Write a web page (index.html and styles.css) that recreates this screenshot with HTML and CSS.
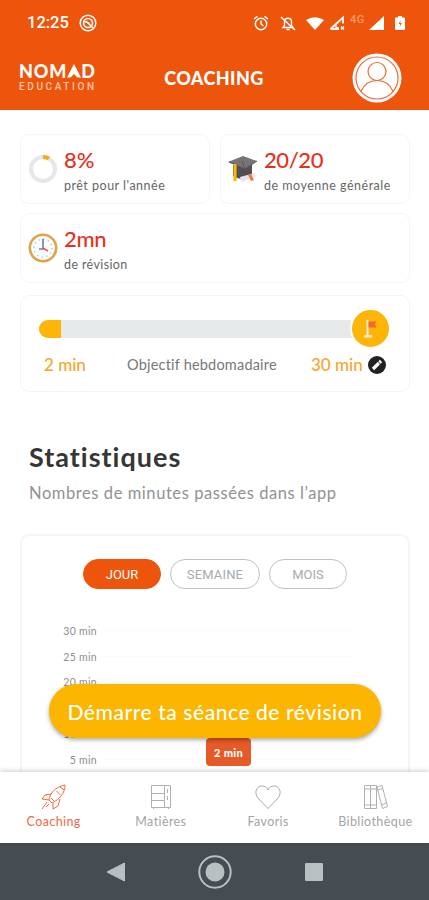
FILE: index.html
```html
<!DOCTYPE html>
<html lang="fr">
<head>
<meta charset="utf-8">
<meta name="viewport" content="width=device-width, initial-scale=1">
<title>Coaching</title>
<link rel="stylesheet" href="styles.css">
</head>
<body>
<div class="phone">
  <header class="top">
    <div class="status">
      <span class="time">12:25</span>
      <svg class="dnd" width="18" height="18" viewBox="0 0 18 18" fill="none" stroke="#fff"><circle cx="9" cy="9" r="7.800" stroke-width="1.500"/><circle cx="9" cy="9" r="4.500" stroke-width="1.600"/><path d="M4.500 7l6 2.500M7 7l7 7" stroke-width="1.500"/></svg>
      <svg class="sys" width="154" height="20" viewBox="0 0 154 20" fill="none" stroke="#fff">
        <circle cx="8" cy="11" r="5.7" stroke-width="1.5"/><path d="M8 7.5V11l2.5 2M1 6l3.5-2.7M15 6l-3.500-2.700" stroke-width="1.5"/>
        <path d="M30 14.500h10l-1.500-2V9c0-5-7-5-7 0v3.500zM33.500 16.500h3" stroke-width="1.400"/><path d="M28 4l14 13" stroke-width="1.600"/>
        <path d="M53 7q9-5.500 18 0l-9 10z" fill="#fff" stroke="none"/>
        <path d="M77.500 16L90 4.500v6M77.500 16H86" stroke-width="1.800"/><path d="M83 11v4h3M88 13.500l3 3m0-3l-3 3" stroke-width="1.300"/>
        <path d="M116 17L131 3v14z" fill="#fff" stroke="none"/>
        <path d="M143 4.500h2V3h4v1.500h2q1 0 1 1V16q0 1-1 1h-8q-1 0-1-1V5.500q0-1 1-1z" fill="#fff" stroke="none"/><path d="M147.700 7l-2 4h1.500l-.5 3 2-4h-1.500z" fill="#ec550b" stroke="none"/>
      </svg>
      <span class="network">4G</span>
    </div>
    <div class="bar">
      <div class="brand"><div class="brand-name">NOM<svg width="14" height="14" viewBox="0 0 14 14"><path d="M7 0l7 13.500h-3.500L7 10l-3.500 3.500H0z" fill="#fff"/></svg>D</div><div class="brand-sub">EDUCATION</div></div>
      <h1>COACHING</h1>
      <svg class="avatar" width="50" height="50" viewBox="0 0 50 50"><circle cx="25" cy="25" r="24.500" fill="#fff"/><g fill="none" stroke="#ec6a35" stroke-width="1.200"><circle cx="25" cy="25" r="21"/><circle cx="25" cy="18.500" r="9"/><path d="M9 38.500C12 31 17 27.500 25 27.500S38 31 41 38.500"/></g></svg>
    </div>
  </header>

  <main class="content">
    <section class="cards">
      <article class="card">
        <svg width="30" height="30" viewBox="0 0 30 30" fill="none" stroke-width="4"><circle cx="15" cy="15" r="12" stroke="#e5e8e9"/><path d="M15 3a12 12 0 0 1 6 1.600" stroke="#f6ab13"/></svg>
        <div class="metric"><strong class="v1">8%</strong><span class="s1">prêt pour l'année</span></div>
      </article>
      <article class="card">
        <svg width="30" height="30" viewBox="0 0 30 30"><path d="M5 11v11q9 6 19 1V9z" fill="#514f54"/><path d="M0 8l15-6 14 5-12 8z" fill="#777178"/><path d="M14 7l3 8M1 8l16 7 12-8" stroke="#5a555b" fill="none"/><path d="M7 10v17" stroke="#f6b60b" stroke-width="3.200"/><path d="M12 23l15-4 1 4-15 5z" fill="#e7e2ec"/><path d="M20 21l3 6 3-1-3-6z" fill="#f27a2c"/></svg>
        <div class="metric"><strong class="v2">20/20</strong><span class="s2">de moyenne générale</span></div>
      </article>
      <article class="card wide">
        <svg width="30" height="30" viewBox="0 0 30 30"><circle cx="15" cy="15" r="13.200" fill="#f8fcff" stroke="#e2a344" stroke-width="2.600"/><circle cx="15" cy="15" r="9" fill="none" stroke="#9ecbe8" stroke-width="1.500" stroke-dasharray="1.200 3.512"/><path d="M15 6v10H11" fill="none" stroke="#73818e" stroke-width="1.600"/><path d="M15 15l5 3" stroke="#ef5065" stroke-width="1.500"/></svg>
        <div class="metric"><strong class="v3">2mn</strong><span class="s3">de révision</span></div>
      </article>
    </section>

    <section class="goal">
      <div class="track-row">
        <div class="track"><div class="fill"></div></div>
        <svg class="flag" width="41" height="41" viewBox="0 0 41 41"><circle cx="20.500" cy="20.500" r="19.500" fill="#fdb507" stroke="#fff" stroke-width="2"/><path d="M17.500 12v15" stroke="#fae9ce" stroke-width="2"/><path d="M14 27h8v2.500h-8z" fill="#f7e7d0"/><path d="M18.500 13.500h8l-1.500 3 1.500 3h-8z" fill="#f26935"/></svg>
      </div>
      <div class="goal-text">
        <strong class="done">2 min</strong><span class="goal-label">Objectif hebdomadaire</span>
        <strong class="aim">30 min</strong>
        <svg width="18" height="18" viewBox="0 0 18 18"><circle cx="9" cy="9" r="9" fill="#222"/><path d="M5 13l6-6M11.500 6.500L13 5" stroke="#fff" stroke-width="3.200"/></svg>
      </div>
    </section>

    <h2>Statistiques</h2>
    <p class="subtitle">Nombres de minutes passées dans l’app</p>

    <section class="stats">
      <div class="filters"><button class="active">JOUR</button><button class="week">SEMAINE</button><button>MOIS</button></div>
      <div class="chart">
        <div class="tick">30 min</div><div class="tick">25 min</div><div class="tick">20 min</div><div class="tick"></div><div class="tick">10 min</div><div class="tick">5 min</div>
        <div class="bubble">2 min</div>
      </div>
    </section>
    <button class="cta"><span>Démarre ta séance de révision</span></button>
  </main>

  <nav class="tabs">
    <a class="selected"><svg width="26" height="26" viewBox="0 0 26 26" fill="none" stroke="#f16b40"><path d="M8 16C9 9 14 3 24 1c0 8-5 14-13 18zM15.500 7l4 4M19 3l4 3M10 10L4 11l-3 4 7 1M19 15l-2 7-5 3 0-6M8 16l3 3M6 18l-5 7M8 20l-3 3"/><path d="M10 14l3 3"/></svg><span class="t1">Coaching</span></a>
    <a><svg width="26" height="26" viewBox="0 0 26 26" fill="none" stroke="#b0b0b0"><path d="M3.500 1.500h19v22h-19zM16.500 1.500v22M3.500 9.500h13M3.500 16.500h13M19.500 5v4M19.500 12v4M5.500 23.500V25M20.500 23.500V25"/></svg><span class="t2">Matières</span></a>
    <a><svg width="26" height="26" viewBox="0 0 26 26" fill="none" stroke="#aaa"><path d="M13 24.500Q7 18.500 3 14C-1 9 1 3 6 2q5-.5 7 4Q15 1.500 20 2c5 1 7 7 3 12Q19 18.500 13 24.500z"/></svg><span class="t3">Favoris</span></a>
    <a><svg width="26" height="26" viewBox="0 0 26 26" fill="none" stroke="#b0b0b0"><path d="M2.500 1.500h6v23h-6zM8.500 1.500h6v23h-6zM15 3l5-1.500 5.500 21-5 2zM2.500 5h12M2.500 21h12M16 6l5-1.500M19.500 21l5-2"/></svg><span class="t4">Bibliothèque</span></a>
  </nav>
  <footer class="system-nav">
    <svg width="20" height="22" viewBox="0 0 20 22"><path d="M1 11L18.500 2v18z" fill="#b9c0c3" stroke="#b9c0c3" stroke-linejoin="round"/></svg>
    <svg width="34" height="34" viewBox="0 0 34 34"><circle cx="17" cy="17" r="15.700" fill="none" stroke="#b9c0c3" stroke-width="2"/><circle cx="17" cy="17" r="9.500" fill="#b9c0c3"/></svg>
    <svg width="20" height="20" viewBox="0 0 20 20"><rect x="1" y="1" width="18" height="18" rx="1" fill="#b9c0c3"/></svg>
  </footer>
</div>
</body>
</html>
```
FILE: styles.css
```css
* { box-sizing: border-box; }
body { margin: 0; background: #fff; font-family: Lato, sans-serif; font-variant-ligatures: none; color: #555; }
h1, h2, p { margin: 0; font-weight: inherit; }
svg { display: block; flex: none; }
button { font: inherit; padding: 0; }
.phone { width: 429px; height: 900px; display: flex; flex-direction: column; overflow: hidden; }

.top { height: 110px; flex: none; background: #ec550b; color: #fff; }
.status { height: 45px; display: flex; align-items: center; padding: 0 22px 0 27px; position: relative; }
.time { font: 500 16.500px Roboto, sans-serif; width: 52px; }
.sys { margin-left: auto; }
.network { position: absolute; left: 350px; top: 13px; font: 500 11px Roboto, sans-serif; letter-spacing: .5px; color: #f69a6c; }
.bar { height: 65px; display: flex; align-items: center; justify-content: space-between; padding: 0 27px 0 19px; }
.brand { width: 77px; white-space: nowrap; }
.brand-name { display: flex; align-items: center; font-size: 18px; line-height: 15px; font-weight: 900; letter-spacing: .9px; }
.brand-sub { font: 500 10px/11px Roboto, sans-serif; letter-spacing: 2.600px; color: #ffc7a9; margin-top: 2px; margin-right: -4px; }
.bar h1 { font-size: 18px; font-weight: 900; letter-spacing: .4px; position: relative; left: -10px; }

.content { position: relative; flex: 1; min-height: 0; overflow: hidden; padding: 24px 19px 0 20px; }
.cards { display: grid; grid-template-columns: 1fr 1fr; grid-template-rows: 70px 70px; gap: 9px 10px; }
.card { border: 1.500px solid #f3f5f5; border-radius: 9px; display: flex; align-items: center; padding: 0 7px; gap: 6px; }
.wide { grid-column: span 2; }
.metric { display: flex; flex-direction: column; white-space: nowrap; padding-top: 3px; }
.metric strong { font-size: 22px; line-height: 26px; font-weight: 500; color: #e5301b; }
.metric span { font-size: 12.500px; line-height: 16px; margin-top: 5px; color: #666; letter-spacing: .5px; }
.metric .v2 { letter-spacing: -.4px; }
.metric .v3 { letter-spacing: -.3px; }
.metric .s3 { letter-spacing: .38px; }

.goal { height: 97px; margin-top: 12px; border: 1.500px solid #f3f5f5; border-radius: 9px; padding: 12px 18px 0 18px; }
.track-row { display: flex; align-items: center; }
.track { flex: 1; height: 18px; margin-right: -4px; border-radius: 9px 0 0 9px; background: #e7eaeb; overflow: hidden; }
.fill { width: 22px; height: 18px; background: #fdb507; }
.flag { position: relative; }
.goal-text { display: flex; align-items: center; height: 31px; padding: 0 3px 0 5px; white-space: nowrap; }
.goal-text strong { font-size: 17px; font-weight: 500; color: #f4a72c; }
.done { width: 83px; }
.goal-label { width: 184px; font-size: 14.500px; letter-spacing: .2px; color: #777; }
.aim { width: 57px; }

h2 { font-size: 27px; line-height: 32px; font-weight: 700; letter-spacing: 1px; color: #363636; margin: 49px 0 0 9px; }
.subtitle { font-size: 16.500px; line-height: 20px; letter-spacing: .57px; margin: 10px 0 0 9px; color: #929292; white-space: nowrap; }

.stats { height: 300px; margin-top: 31px; border: 2px solid #f4f5f5; border-radius: 9px; padding-top: 23px; }
.filters { display: flex; gap: 9px; padding-left: 61px; }
.filters button { width: 78px; height: 30px; border-radius: 15px; border: 1px solid #bdc1c5; color: #a6abb0; background: #fff; font: 400 13px/30px Roboto, sans-serif; }
.filters .week { width: 90px; letter-spacing: .15px; }
.filters .active { background: #ec550b; border-color: #ec550b; color: #fff; }
.chart { position: relative; padding: 29px 55px 0 31px; }
.tick { height: 25.800px; display: grid; grid-template-columns: 44px 1fr; gap: 8px; align-items: center; text-align: right; font-size: 10.500px; letter-spacing: .3px; color: #8e8e8e; }
.tick::after { content: ""; grid-column: 2; height: 1px; background: #fafafa; }
.bubble { position: absolute; left: 184px; top: 149px; width: 45px; height: 28px; display: grid; place-items: center; background: #e65a28; border-radius: 4px; color: #fff; font-size: 11px; font-weight: 900; letter-spacing: .3px; }
.cta { position: absolute; left: 49px; top: 574px; width: 332px; height: 54px; border: 0; border-radius: 27px; background: #fcb500; color: #fff; font-size: 21px; font-weight: 500; letter-spacing: .57px; white-space: nowrap; box-shadow: 0 2px 4px #0005; }

.tabs { position: relative; height: 71px; flex: none; background: #fff; display: grid; grid-template-columns: repeat(4, 1fr); box-shadow: 0 -1px 5px #0003; }
.tabs a { display: flex; flex-direction: column; align-items: center; padding-top: 12px; font-size: 12.500px; line-height: 16px; letter-spacing: .4px; color: #a4a4a4; gap: 4px; }
.tabs .selected { color: #f16945; }
.system-nav { height: 57px; flex: none; background: #454d52; display: flex; align-items: center; justify-content: center; gap: 72px; }
```
